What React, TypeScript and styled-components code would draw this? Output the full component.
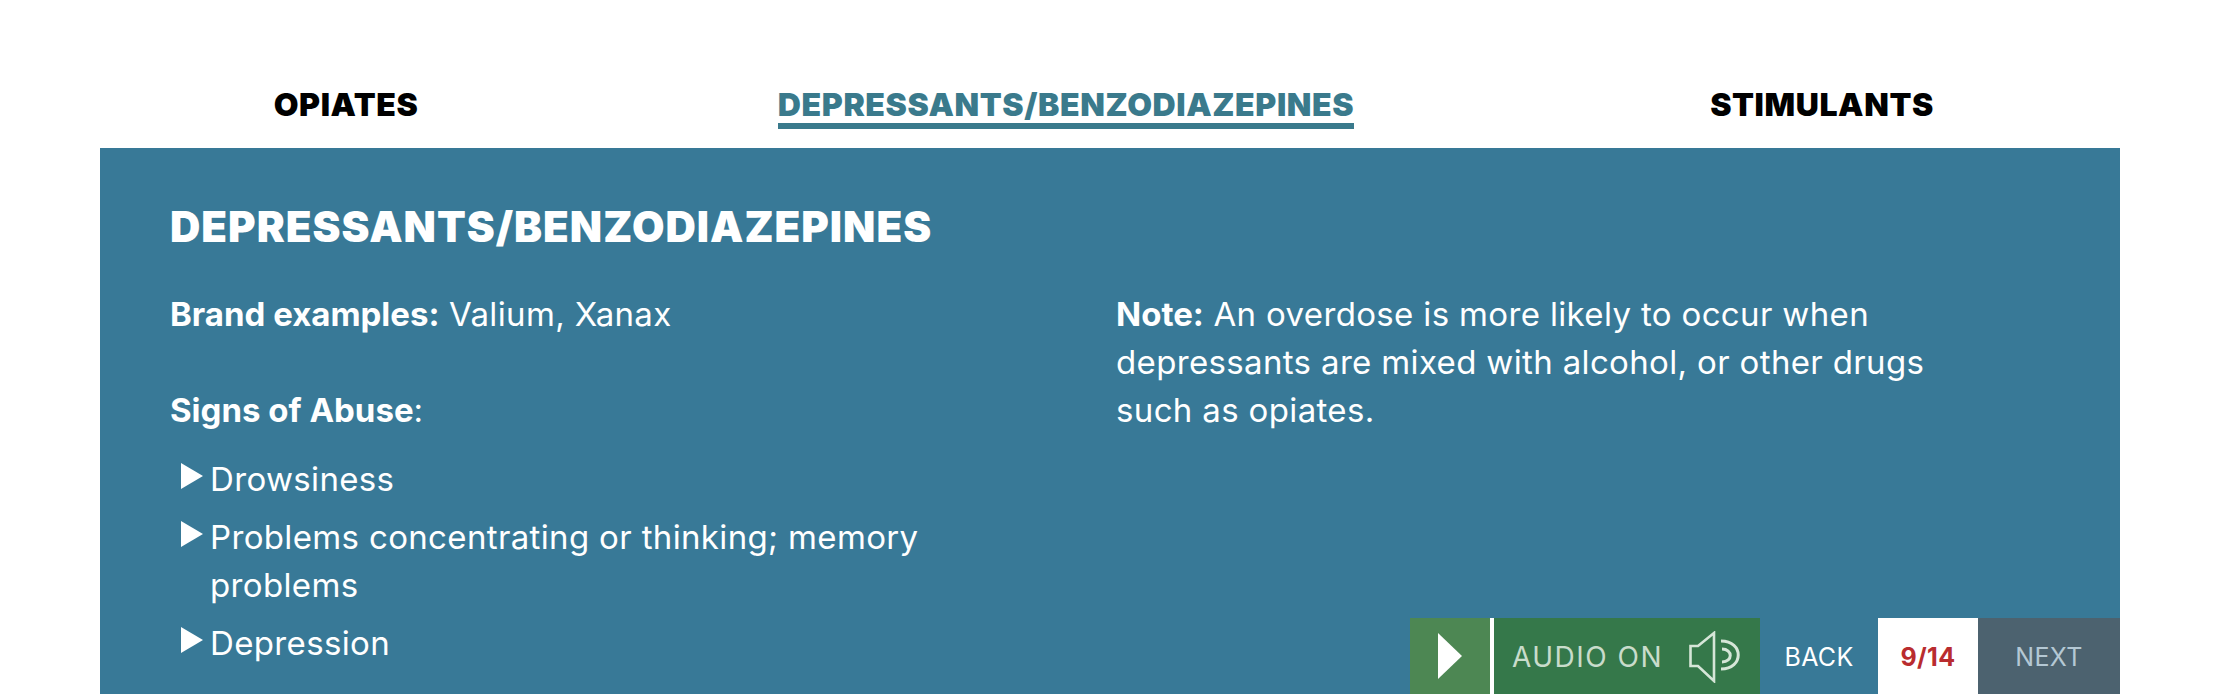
import React from "react";
import styled, { createGlobalStyle } from "styled-components";

const GlobalStyle = createGlobalStyle`
  html, body {
    margin: 0;
    padding: 0;
    height: 694px;
    overflow: hidden;
    background: #fff;
    font-family: "Inter", "Liberation Sans", sans-serif;
  }
`;

const Page = styled.div`
  position: relative;
  width: 2214px;
  height: 694px;
  overflow: hidden;
  padding: 0 94px 0 100px;
  box-sizing: border-box;
`;

const Tabs = styled.ul`
  display: grid;
  grid-template-columns: 492px 948px 564px;
  height: 148px;
  margin: 0;
  padding: 0;
  list-style: none;
`;

const Tab = styled.li`
  display: flex;
  justify-content: center;
  padding-top: 85px;
`;

const TabLabel = styled.span<{ $active?: boolean }>`
  height: 44px;
  box-sizing: border-box;
  padding-top: 1px;
  font-size: 32px;
  line-height: 37px;
  font-weight: 900;
  letter-spacing: 0.6px;
  white-space: nowrap;
  color: ${(p) => (p.$active ? "#3a7a8c" : "#000")};
  border-bottom: ${(p) => (p.$active ? "6px solid #3a7a8c" : "none")};
`;

const Panel = styled.main`
  height: 546px;
  background: #387997;
  color: #fff;
  padding: 53px 70px 0;
  box-sizing: border-box;
`;

const Heading = styled.h1`
  margin: 0 0 37px;
  font-size: 42px;
  line-height: 52px;
  font-weight: 900;
  letter-spacing: 1px;
  white-space: nowrap;
`;

const Columns = styled.div`
  display: grid;
  grid-template-columns: 946px 830px;
`;

const Text = styled.p`
  margin: 0 0 48px;
  font-size: 33px;
  line-height: 48px;
  letter-spacing: 0.35px;

  b {
    letter-spacing: 0;
  }
`;

const List = styled.ul`
  margin: -27px 0 0;
  padding: 0;
  list-style: none;
  width: 760px;
`;

const Item = styled.li`
  display: flex;
  gap: 7px;
  margin-bottom: 10px;
  padding-left: 11px;
  font-size: 33px;
  line-height: 48px;
  letter-spacing: 0.35px;
`;

const Arrow = styled.svg`
  flex: none;
  width: 22px;
  height: 26px;
  margin-top: 8px;
`;

const Controls = styled.nav`
  position: absolute;
  right: 94px;
  bottom: 0;
  display: flex;
  height: 76px;
  align-items: stretch;
  font-size: 25px;
  letter-spacing: 0.3px;
`;

const PlayButton = styled.div`
  width: 80px;
  background: #4d8753;
  border-right: 4px solid #fff;
  display: flex;
  align-items: center;
  justify-content: center;
`;

const AudioButton = styled.div`
  width: 266px;
  background: #35784a;
  color: #c9dccb;
  display: flex;
  align-items: center;
  padding: 2px 0 0 18px;
  box-sizing: border-box;
  gap: 26px;
  font-size: 28px;
  letter-spacing: 1.5px;
  white-space: nowrap;
`;

const BackButton = styled.div`
  width: 118px;
  padding-top: 2px;
  box-sizing: border-box;
  display: flex;
  align-items: center;
  justify-content: center;
  color: #fff;
`;

const Counter = styled.div`
  width: 100px;
  padding-top: 2px;
  box-sizing: border-box;
  background: #fff;
  color: #b92c2f;
  font-weight: 700;
  display: flex;
  align-items: center;
  justify-content: center;
`;

const NextButton = styled.div`
  width: 142px;
  padding-top: 2px;
  box-sizing: border-box;
  background: #4c626f;
  color: #b4c8d4;
  display: flex;
  align-items: center;
  justify-content: center;
`;

const symptoms = [
  "Drowsiness",
  "Problems concentrating or thinking; memory problems",
  "Depression",
];

export default function App() {
  return (
    <Page>
      <GlobalStyle />
      <Tabs>
        <Tab>
          <TabLabel>OPIATES</TabLabel>
        </Tab>
        <Tab>
          <TabLabel $active>DEPRESSANTS/BENZODIAZEPINES</TabLabel>
        </Tab>
        <Tab>
          <TabLabel>STIMULANTS</TabLabel>
        </Tab>
      </Tabs>
      <Panel>
        <Heading>DEPRESSANTS/BENZODIAZEPINES</Heading>
        <Columns>
          <div>
            <Text>
              <b>Brand examples:</b> Valium, Xanax
            </Text>
            <Text>
              <b>Signs of Abuse</b>:
            </Text>
            <List>
              {symptoms.map((s) => (
                <Item key={s}>
                  <Arrow viewBox="0 0 22 26">
                    <path d="M0 0 L22 13 L0 26 Z" fill="#fff" />
                  </Arrow>
                  <span>{s}</span>
                </Item>
              ))}
            </List>
          </div>
          <Text>
            <b>Note:</b> An overdose is more likely to occur when depressants are mixed with
            alcohol, or other drugs such as opiates.
          </Text>
        </Columns>
      </Panel>
      <Controls>
        <PlayButton>
          <svg width="24" height="46" viewBox="0 0 24 46">
            <path d="M0 0 L24 23 L0 46 Z" fill="#fff" />
          </svg>
        </PlayButton>
        <AudioButton>
          <span>AUDIO ON</span>
          <svg width="52" height="52" viewBox="0 0 52 52" fill="none" stroke="#d6e6d8" strokeWidth="2.6">
            <path d="M1.5 15 H9 L25 2 V50 L9 35 H1.5 Z" />
            <path d="M33 18 C44 18 44 31 33 31" strokeWidth="3" />
            <path d="M32 10 C55 10 55 38 32 38" strokeWidth="3" />
          </svg>
        </AudioButton>
        <BackButton>BACK</BackButton>
        <Counter>9/14</Counter>
        <NextButton>NEXT</NextButton>
      </Controls>
    </Page>
  );
}
